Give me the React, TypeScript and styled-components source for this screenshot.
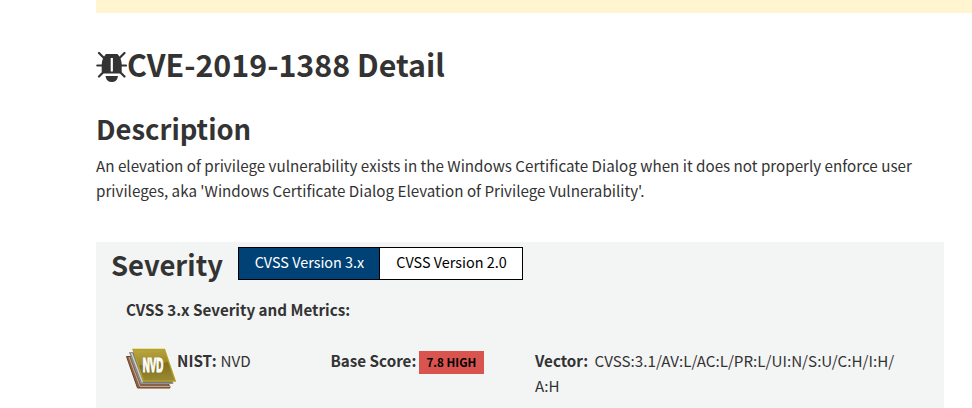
import React from "react";
import styled, { createGlobalStyle } from "styled-components";

const GlobalStyle = createGlobalStyle`
  body {
    margin: 0;
    background: #fff;
    color: #333;
    font-family: "Noto Sans CJK SC", "Noto Sans", sans-serif;
    font-size: 15.2px;
    line-height: 25px;
    overflow: hidden;
  }
`;

const Page = styled.main`
  width: 972px;
  height: 408px;
  box-sizing: border-box;
  padding-left: 96px;
  overflow: hidden;
`;

const Notice = styled.div`
  height: 13px;
  background: #fff5d1;
`;

const Title = styled.h1`
  display: flex;
  align-items: flex-start;
  margin: 30px 0 0;
  height: 42px;
  font-size: 30.4px;
  line-height: 42px;
  white-space: nowrap;
`;

const Heading = styled.h2`
  margin: 0;
  font-size: 27.4px;
  line-height: 40px;
  white-space: nowrap;
`;

const DescriptionSection = styled.section`
  height: 134px;
  padding-top: 23px;
`;

const Paragraph = styled.p`
  margin: 5px 0 0;
  white-space: nowrap;
`;

const SeverityPanel = styled.section`
  width: 848px;
  height: 166px;
  box-sizing: border-box;
  padding: 2px 15px 0;
  background: #f3f5f5;
`;

const PanelHeader = styled.div`
  display: flex;
  height: 40px;
`;

const Tabs = styled.div`
  display: flex;
  width: 285px;
  height: 33px;
  margin: 3px 406px 0 auto;
  box-sizing: border-box;
  border: 1px solid #000;
`;

const Tab = styled.button<{ $active?: boolean }>`
  box-sizing: border-box;
  width: ${(p) => (p.$active ? 141 : 142)}px;
  padding: 0 0 3px 1px;
  border: 0;
  border-right: ${(p) => (p.$active ? "1px solid #000" : "0")};
  background: ${(p) => (p.$active ? "#004275" : "#fff")};
  color: ${(p) => (p.$active ? "#fff" : "#000")};
  font-family: inherit;
  font-size: 14.4px;
  line-height: 28px;
  white-space: nowrap;
`;

const Subheading = styled.div`
  margin: 13px 0 0 15px;
  font-weight: 700;
`;

const Metrics = styled.div`
  display: grid;
  grid-template-columns: 204.5px 204.5px 1fr;
  margin: 26px 0 0 15px;
`;

const Metric = styled.div`
  display: flex;
  align-items: flex-start;
  white-space: nowrap;
`;

const Label = styled.strong<{ $gap?: number }>`
  margin-right: ${(p) => p.$gap ?? 4}px;
`;

const Vector = styled.div`
  white-space: nowrap;
`;

const Score = styled.a`
  height: 23px;
  width: 65px;
  margin-top: 3px;
  background: #d9534f;
  color: #000;
  font-size: 11.6px;
  font-weight: 700;
  line-height: 23px;
  text-align: center;
`;

const BugSvg = styled.svg`
  flex: none;
  margin-top: 7px;
`;

const NvdSvg = styled.svg`
  flex: none;
`;

function BugIcon() {
  return (
    <BugSvg width="31" height="34" viewBox="0 0 31 34">
      <g stroke="#333" strokeWidth="2.2" strokeLinecap="round">
        <path d="M3 3 8.500 8.500M28.500 3l-5.500 5.500M1.300 15.500H7M30 15.500H24M3 26.500l5-5M28.500 26.500l-5-5" />
      </g>
      <path d="M10 4h11.500q4.200 4.500 4.200 11v6.500L24 23.500H7.500l-1.800-2V15Q5.700 8.500 10 4Z" fill="#333" />
      <path d="M14.700 8h2.200V21.500h-2.200z" fill="#fff" />
      <path d="M9.500 26h12.500q-.8 6-6.200 6T9.500 26Z" fill="#333" />
    </BugSvg>
  );
}

function NvdIcon() {
  return (
    <NvdSvg width="51" height="42" viewBox="0 0 51 42">
      <defs>
        <linearGradient id="cover" x1="0" y1="0" x2="0.15" y2="1">
          <stop offset="0" stopColor="#bda93c" />
          <stop offset="0.5" stopColor="#9b8932" />
          <stop offset="0.54" stopColor="#806f1d" />
          <stop offset="1" stopColor="#978632" />
        </linearGradient>
      </defs>
      <path d="M.5 8.500h33l10.500 31.500H11.500Z" fill="#85644d" stroke="#763e14" />
      <path d="m3 9 11 29.500h31" stroke="#c5a995" fill="none" />
      <path d="M3.500 4.500h32L47 35.500H15Z" fill="#77777c" stroke="#929292" />
      <path d="m5.500 5 11 29.500" stroke="#d0d0d0" strokeWidth="1.500" fill="none" />
      <path d="M7 1.500h31.500L49.300 33H17.500Z" fill="url(#cover)" stroke="#b5a020" strokeWidth="1.300" />
      <text transform="translate(16.800 24) scale(.5 1)" fill="#fff" stroke="#fff" strokeWidth="1.200" fontFamily="Liberation Sans" fontWeight="700" fontSize="19.500">
        NVD
      </text>
    </NvdSvg>
  );
}

export default function App() {
  return (
    <>
      <GlobalStyle />
      <Page>
        <Notice />
        <Title>
          <BugIcon />
          <span>CVE-2019-1388 Detail</span>
        </Title>
        <DescriptionSection>
          <Heading>Description</Heading>
          <Paragraph>
            An elevation of privilege vulnerability exists in the Windows Certificate Dialog when it does not properly enforce user
            <br />
            privileges, aka 'Windows Certificate Dialog Elevation of Privilege Vulnerability'.
          </Paragraph>
        </DescriptionSection>
        <SeverityPanel>
          <PanelHeader>
            <Heading>Severity</Heading>
            <Tabs>
              <Tab $active>CVSS Version 3.x</Tab>
              <Tab>CVSS Version 2.0</Tab>
            </Tabs>
          </PanelHeader>
          <Subheading>CVSS 3.x Severity and Metrics:</Subheading>
          <Metrics>
            <Metric>
              <NvdIcon />
              <Label>NIST:</Label>
              <span>NVD</span>
            </Metric>
            <Metric>
              <Label $gap={2.5}>Base Score:</Label>
              <Score>7.8 HIGH</Score>
            </Metric>
            <Vector>
              <Label $gap={3}>Vector:</Label> CVSS:3.1/AV:L/AC:L/PR:L/UI:N/S:U/C:H/I:H/
              <br />
              A:H
            </Vector>
          </Metrics>
        </SeverityPanel>
      </Page>
    </>
  );
}
